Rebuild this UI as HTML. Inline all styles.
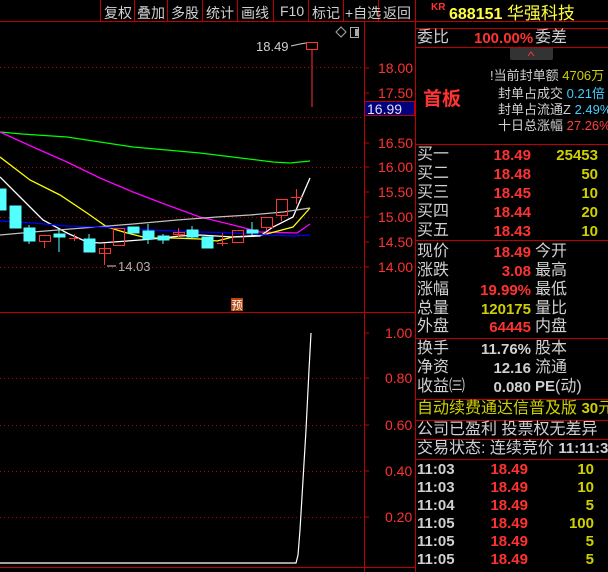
<!DOCTYPE html>
<html><head><meta charset="utf-8"><style>
*{margin:0;padding:0;box-sizing:border-box}
body{width:608px;height:572px;background:#000;position:relative;overflow:hidden;font-family:"Liberation Sans","Noto Sans CJK SC",sans-serif;color:#c8c8c8}
.a{position:absolute;white-space:nowrap;line-height:1}
.tb{position:absolute;top:3px;font-size:14px;color:#d0d0d0}
.l{font-size:16px;color:#d0d0d0}
.r{color:#ff3232;font-weight:bold;font-size:15px}
.y{color:#d0d000;font-weight:bold;font-size:15px}
.w{color:#d0d0d0;font-weight:bold;font-size:15px}
.hl{position:absolute;left:415px;right:0;height:1px;background:#c00000}
</style></head><body>
<svg width="608" height="572" style="position:absolute;left:0;top:0">
<g stroke="#c00000" stroke-width="1">
<line x1="0" y1="21.5" x2="608" y2="21.5"/>
<line x1="100.5" y1="0" x2="100.5" y2="21"/><line x1="134.5" y1="0" x2="134.5" y2="21"/><line x1="167.5" y1="0" x2="167.5" y2="21"/><line x1="202.5" y1="0" x2="202.5" y2="21"/><line x1="237.5" y1="0" x2="237.5" y2="21"/><line x1="273.5" y1="0" x2="273.5" y2="21"/><line x1="308.5" y1="0" x2="308.5" y2="21"/><line x1="343.5" y1="0" x2="343.5" y2="21"/><line x1="378.5" y1="0" x2="378.5" y2="21"/>
<line x1="364.5" y1="21" x2="364.5" y2="572"/>
<line x1="415.5" y1="0" x2="415.5" y2="572"/>
<line x1="0" y1="312.5" x2="415" y2="312.5"/>
<line x1="0" y1="567.5" x2="415" y2="567.5"/>
</g>
<g stroke="#c00000" stroke-dasharray="1,3">
<line x1="0" y1="67.5" x2="364" y2="67.5"/><line x1="0" y1="117.5" x2="364" y2="117.5"/><line x1="0" y1="167.5" x2="364" y2="167.5"/><line x1="0" y1="217.5" x2="364" y2="217.5"/><line x1="0" y1="267.5" x2="364" y2="267.5"/>
<line x1="0" y1="378.5" x2="364" y2="378.5"/><line x1="0" y1="425.5" x2="364" y2="425.5"/><line x1="0" y1="471.5" x2="364" y2="471.5"/><line x1="0" y1="517.5" x2="364" y2="517.5"/>
</g>
<g stroke="#c00000"><line x1="364" y1="68" x2="369" y2="68"/><line x1="364" y1="93" x2="369" y2="93"/><line x1="364" y1="143" x2="369" y2="143"/><line x1="364" y1="167" x2="369" y2="167"/><line x1="364" y1="192" x2="369" y2="192"/><line x1="364" y1="217" x2="369" y2="217"/><line x1="364" y1="242" x2="369" y2="242"/><line x1="364" y1="267" x2="369" y2="267"/>
<line x1="364" y1="333" x2="369" y2="333"/><line x1="364" y1="378" x2="369" y2="378"/><line x1="364" y1="425" x2="369" y2="425"/><line x1="364" y1="471" x2="369" y2="471"/><line x1="364" y1="517" x2="369" y2="517"/></g>
<g fill="none" stroke-width="1.3">
<polyline stroke="#00ff00" points="0,132 22,134 67,137 133,147 200,153 273,162 290,163 310,161"/>
<polyline stroke="#ff00ff" points="0,132 33,147 67,162 100,178 133,192 167,205 200,217 233,225 260,232 297,233 310,224"/>
<polyline stroke="#ffff00" points="0,157 30,180 60,195 87,213 107,227 127,233 147,238 173,238 200,239 217,241 233,237 263,235 293,227 310,208"/>
<polyline stroke="#ffffff" points="0,177 20,197 43,220 67,233 87,242 100,243 127,241 153,239 180,236 200,235 233,237 260,236 273,227 293,217 310,178"/>
<polyline stroke="#c0c0c0" points="0,235 33,232 83,228 133,224 177,220 217,217 250,215 283,212 310,208"/>
<polyline stroke="#0000ff" points="0,221 33,223 67,226 100,227 150,230 200,232 233,233 267,235 293,236 310,235"/>
</g>
<g fill="#54ffff" stroke="#54ffff">
<rect x="0" y="189" width="6" height="21"/><rect x="10" y="206" width="11" height="22"/><line x1="29" y1="225" x2="29" y2="244"/><rect x="24" y="228" width="11" height="13"/>
<line x1="59" y1="229" x2="59" y2="252"/><rect x="54" y="234" width="11" height="3"/>
<line x1="89" y1="234" x2="89" y2="252"/><rect x="84" y="239" width="11" height="13"/>
<rect x="128" y="227" width="11" height="6"/><line x1="148" y1="224" x2="148" y2="244"/><rect x="143" y="231" width="11" height="8"/>
<line x1="163" y1="234" x2="163" y2="244"/><rect x="158" y="236" width="11" height="4"/>
<line x1="192" y1="226" x2="192" y2="238"/><rect x="187" y="230" width="11" height="7"/>
<rect x="202" y="237" width="11" height="11"/><line x1="252" y1="222" x2="252" y2="235"/><rect x="247" y="230" width="11" height="3"/>
</g>
<g fill="none" stroke="#ff3232">
<line x1="44.5" y1="241" x2="44.5" y2="248"/><rect x="39.5" y="235.5" width="11" height="6"/>
<line x1="74.5" y1="234" x2="74.5" y2="241"/><line x1="69" y1="238.5" x2="79" y2="238.5"/>
<line x1="104.5" y1="243" x2="104.5" y2="265"/><rect x="99.5" y="248.5" width="11" height="5"/>
<rect x="113.5" y="228.5" width="11" height="17"/>
<rect x="173.5" y="232.5" width="11" height="2"/><line x1="178.5" y1="228" x2="178.5" y2="237"/>
<line x1="222.5" y1="233" x2="222.5" y2="246"/><line x1="217" y1="243.5" x2="228" y2="243.5"/>
<rect x="232.5" y="230.5" width="11" height="12"/>
<rect x="261.5" y="217.5" width="11" height="10"/><line x1="266.5" y1="227" x2="266.5" y2="231"/>
<rect x="276.5" y="199.5" width="11" height="16"/><line x1="281.5" y1="215" x2="281.5" y2="221"/>
<line x1="296.5" y1="189" x2="296.5" y2="204"/><line x1="291" y1="197.5" x2="302" y2="197.5"/>
<rect x="306.5" y="42.5" width="11" height="7"/><line x1="312" y1="49" x2="312" y2="107"/>
</g>
<polyline fill="none" stroke="#d0d0d0" points="291,46 300,44 306,43"/>
<polyline fill="none" stroke="#d0d0d0" points="107,266 116,266"/>
<polyline fill="none" stroke="#fff" stroke-width="1.2" points="0,563 296,563 298,555 300,530 303,480 306,430 309,370 311,333"/>
<rect x="231" y="298" width="12" height="13" fill="#b84a10"/>
<text x="237" y="309" fill="#fff" font-size="11" text-anchor="middle" font-family="Noto Sans CJK SC">预</text>
<path d="M336 32 L341 27 L346 32 L341 37Z" fill="none" stroke="#aaa"/>
<rect x="350.5" y="27.5" width="8" height="10" fill="none" stroke="#aaa"/><rect x="355" y="29" width="3" height="7" fill="#aaa"/>
<rect x="510" y="47" width="43" height="13" rx="2" fill="#333"/>
<path d="M528 56 L531 52 L534 56" fill="none" stroke="#ff3232"/>
<rect x="364.5" y="101.5" width="50" height="14" fill="#000080" stroke="#c00000"/>
</svg>
<div class="tb" style="left:104px">复权</div><div class="tb" style="left:137px">叠加</div><div class="tb" style="left:171px">多股</div><div class="tb" style="left:206px">统计</div><div class="tb" style="left:241px">画线</div><div class="tb" style="left:280px">F10</div><div class="tb" style="left:312px">标记</div><div class="tb" style="left:345px">+自选</div><div class="tb" style="left:383px">返回</div>
<div class="a" style="left:256px;top:40px;font-size:13px;color:#d0d0d0">18.49</div>
<div class="a" style="left:118px;top:260px;font-size:13px;color:#b0b0b0">14.03</div>
<div class="a" style="left:367px;top:102px;font-size:14px;color:#e0e0e0">16.99</div>
<div class="a" style="left:378px;top:61px;font-size:14px;color:#ff3232">18.00</div>
<div class="a" style="left:378px;top:86px;font-size:14px;color:#ff3232">17.50</div>
<div class="a" style="left:378px;top:136px;font-size:14px;color:#ff3232">16.50</div>
<div class="a" style="left:378px;top:160px;font-size:14px;color:#ff3232">16.00</div>
<div class="a" style="left:378px;top:185px;font-size:14px;color:#ff3232">15.50</div>
<div class="a" style="left:378px;top:210px;font-size:14px;color:#ff3232">15.00</div>
<div class="a" style="left:378px;top:235px;font-size:14px;color:#ff3232">14.50</div>
<div class="a" style="left:378px;top:260px;font-size:14px;color:#ff3232">14.00</div>
<div class="a" style="left:385px;top:326px;font-size:14px;color:#ff3232">1.00</div>
<div class="a" style="left:385px;top:371px;font-size:14px;color:#ff3232">0.80</div>
<div class="a" style="left:385px;top:418px;font-size:14px;color:#ff3232">0.60</div>
<div class="a" style="left:385px;top:464px;font-size:14px;color:#ff3232">0.40</div>
<div class="a" style="left:385px;top:510px;font-size:14px;color:#ff3232">0.20</div>

<div class="a" style="left:431px;top:3px;font-size:10px;color:#ff3232;font-weight:bold">KR</div>
<div class="a" style="left:449px;top:5px;font-size:16px;color:#ffff40;font-weight:bold">688151 <span style="font-weight:normal;font-size:17px">华强科技</span></div>
<div class="hl" style="top:28px"></div>
<div class="a l" style="left:417px;top:30px">委比</div>
<div class="a r" style="left:474px;top:31px">100.00%</div>
<div class="a l" style="left:535px;top:30px">委差</div>
<div class="hl" style="top:47px"></div>
<div class="a" style="left:423px;top:90px;font-size:19px;color:#ff3232;font-weight:bold">首板</div>
<div class="a" style="left:490px;top:69px;font-size:13px;color:#d0d0d0">!当前封单额 <span style="color:#d0d000">4706万</span></div>
<div class="a" style="left:498px;top:87px;font-size:13px;color:#d0d0d0">封单占成交 <span style="color:#40d0ff">0.21倍</span></div>
<div class="a" style="left:498px;top:103px;font-size:13px;color:#d0d0d0">封单占流通Z <span style="color:#40d0ff">2.49%</span></div>
<div class="a" style="left:498px;top:119px;font-size:13px;color:#d0d0d0">十日总涨幅 <span style="color:#ff4040">27.26%</span></div>
<div class="hl" style="top:144px"></div>
<div class="a l" style="left:417px;top:147px">买一</div><div class="a r" style="right:77px;top:148px">18.49</div><div class="a y" style="right:10px;top:148px">25453</div>
<div class="a l" style="left:417px;top:166px">买二</div><div class="a r" style="right:77px;top:167px">18.48</div><div class="a y" style="right:10px;top:167px">50</div>
<div class="a l" style="left:417px;top:185px">买三</div><div class="a r" style="right:77px;top:186px">18.45</div><div class="a y" style="right:10px;top:186px">10</div>
<div class="a l" style="left:417px;top:204px">买四</div><div class="a r" style="right:77px;top:205px">18.44</div><div class="a y" style="right:10px;top:205px">20</div>
<div class="a l" style="left:417px;top:223px">买五</div><div class="a r" style="right:77px;top:224px">18.43</div><div class="a y" style="right:10px;top:224px">10</div>
<div class="hl" style="top:240px"></div>
<div class="a l" style="left:417px;top:244px">现价</div><div class="a r" style="right:77px;top:245px">18.49</div><div class="a l" style="left:535px;top:244px">今开</div>
<div class="a l" style="left:417px;top:263px">涨跌</div><div class="a r" style="right:77px;top:264px">3.08</div><div class="a l" style="left:535px;top:263px">最高</div>
<div class="a l" style="left:417px;top:282px">涨幅</div><div class="a r" style="right:77px;top:283px">19.99%</div><div class="a l" style="left:535px;top:282px">最低</div>
<div class="a l" style="left:417px;top:301px">总量</div><div class="a y" style="right:77px;top:302px">120175</div><div class="a l" style="left:535px;top:301px">量比</div>
<div class="a l" style="left:417px;top:319px">外盘</div><div class="a r" style="right:77px;top:320px">64445</div><div class="a l" style="left:535px;top:319px">内盘</div>
<div class="hl" style="top:338px"></div>
<div class="a l" style="left:417px;top:341px">换手</div><div class="a w" style="right:77px;top:342px">11.76%</div><div class="a l" style="left:535px;top:341px">股本</div>
<div class="a l" style="left:417px;top:360px">净资</div><div class="a w" style="right:77px;top:361px">12.16</div><div class="a l" style="left:535px;top:360px">流通</div>
<div class="a l" style="left:417px;top:379px">收益㈢</div><div class="a w" style="right:77px;top:380px">0.080</div><div class="a l" style="left:535px;top:379px"><b style="font-size:15px">PE</b>(动)</div>
<div class="hl" style="top:399px"></div>
<div class="a" style="left:417px;top:401px;font-size:16px;color:#d0d000">自动续费通达信普及版 <b style="font-size:15px">30</b>元</div>
<div class="hl" style="top:420px"></div>
<div class="a l" style="left:417px;top:422px">公司已盈利 投票权无差异</div>
<div class="hl" style="top:439px"></div>
<div class="a l" style="left:417px;top:441px">交易状态: 连续竞价 <b style="font-size:15px">11:11:35</b></div>
<div class="hl" style="top:459px"></div>
<div class="a w" style="left:417px;top:462px">11:03</div><div class="a r" style="right:80px;top:462px">18.49</div><div class="a y" style="right:14px;top:462px">10</div>
<div class="a w" style="left:417px;top:480px">11:03</div><div class="a r" style="right:80px;top:480px">18.49</div><div class="a y" style="right:14px;top:480px">10</div>
<div class="a w" style="left:417px;top:498px">11:04</div><div class="a r" style="right:80px;top:498px">18.49</div><div class="a y" style="right:14px;top:498px">5</div>
<div class="a w" style="left:417px;top:516px">11:05</div><div class="a r" style="right:80px;top:516px">18.49</div><div class="a y" style="right:14px;top:516px">100</div>
<div class="a w" style="left:417px;top:534px">11:05</div><div class="a r" style="right:80px;top:534px">18.49</div><div class="a y" style="right:14px;top:534px">5</div>
<div class="a w" style="left:417px;top:552px">11:05</div><div class="a r" style="right:80px;top:552px">18.49</div><div class="a y" style="right:14px;top:552px">5</div>
</body></html>
